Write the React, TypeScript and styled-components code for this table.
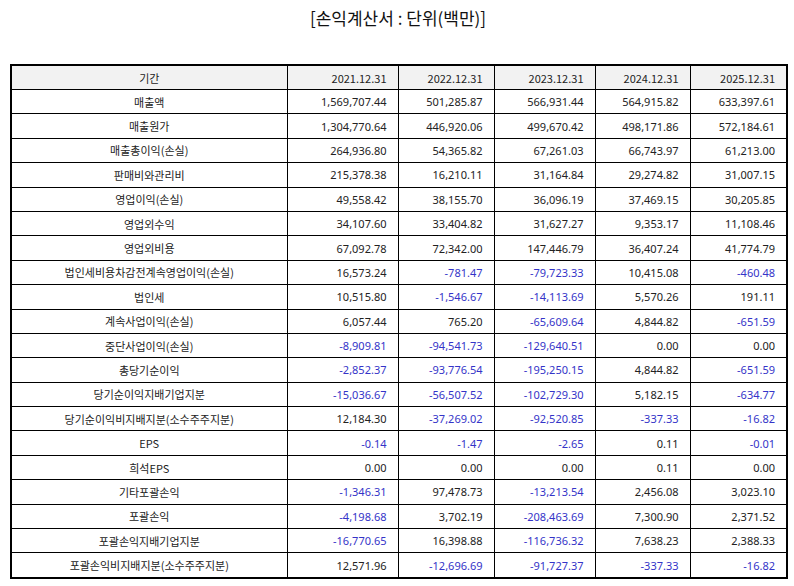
import React from 'react';
import styled, { createGlobalStyle } from 'styled-components';

const GlobalStyle = createGlobalStyle`
  body {
    margin: 0;
    background: #ffffff;
    font-family: "Noto Sans", "Noto Sans CJK KR", sans-serif;
  }
`;

const Page = styled.div`
  width: 794px;
  padding: 6px 8px 0 10px;
  box-sizing: border-box;
`;

const Title = styled.h1`
  margin: 0;
  height: 58px;
  font-size: 17px;
  font-weight: 400;
  text-align: center;
  color: #111;
  line-height: 24px;
  font-family: "Noto Sans CJK KR", sans-serif;
`;

const Table = styled.table`
  width: 776px;
  border-collapse: collapse;
  table-layout: fixed;
  border: 2px solid #000;
  font-size: 11px;
  color: #222;
`;

const HeadCell = styled.th<{ $label?: boolean }>`
  height: 23px;
  padding: 0 11px;
  border: 1px solid #000;
  background: #f2f2f2;
  font-weight: 400;
  text-align: ${(p) => (p.$label ? 'center' : 'right')};
  font-family: "Noto Sans CJK KR", sans-serif;
`;

const LabelCell = styled.td`
  height: 23.4px;
  padding: 0 8px;
  border: 1px solid #000;
  text-align: center;
  font-family: "Noto Sans CJK KR", sans-serif;
`;

const ValueCell = styled.td<{ $neg: boolean }>`
  padding: 0 11px;
  border: 1px solid #000;
  text-align: right;
  color: ${(p) => (p.$neg ? '#3434c8' : '#222')};
`;

const years = ['2021.12.31', '2022.12.31', '2023.12.31', '2024.12.31', '2025.12.31'];
const widths = [276, 111, 96, 101, 95, 97];

const rows: [string, string[]][] = [
  ['매출액', ['1,569,707.44', '501,285.87', '566,931.44', '564,915.82', '633,397.61']],
  ['매출원가', ['1,304,770.64', '446,920.06', '499,670.42', '498,171.86', '572,184.61']],
  ['매출총이익(손실)', ['264,936.80', '54,365.82', '67,261.03', '66,743.97', '61,213.00']],
  ['판매비와관리비', ['215,378.38', '16,210.11', '31,164.84', '29,274.82', '31,007.15']],
  ['영업이익(손실)', ['49,558.42', '38,155.70', '36,096.19', '37,469.15', '30,205.85']],
  ['영업외수익', ['34,107.60', '33,404.82', '31,627.27', '9,353.17', '11,108.46']],
  ['영업외비용', ['67,092.78', '72,342.00', '147,446.79', '36,407.24', '41,774.79']],
  ['법인세비용차감전계속영업이익(손실)', ['16,573.24', '-781.47', '-79,723.33', '10,415.08', '-460.48']],
  ['법인세', ['10,515.80', '-1,546.67', '-14,113.69', '5,570.26', '191.11']],
  ['계속사업이익(손실)', ['6,057.44', '765.20', '-65,609.64', '4,844.82', '-651.59']],
  ['중단사업이익(손실)', ['-8,909.81', '-94,541.73', '-129,640.51', '0.00', '0.00']],
  ['총당기순이익', ['-2,852.37', '-93,776.54', '-195,250.15', '4,844.82', '-651.59']],
  ['당기순이익지배기업지분', ['-15,036.67', '-56,507.52', '-102,729.30', '5,182.15', '-634.77']],
  ['당기순이익비지배지분(소수주주지분)', ['12,184.30', '-37,269.02', '-92,520.85', '-337.33', '-16.82']],
  ['EPS', ['-0.14', '-1.47', '-2.65', '0.11', '-0.01']],
  ['희석EPS', ['0.00', '0.00', '0.00', '0.11', '0.00']],
  ['기타포괄손익', ['-1,346.31', '97,478.73', '-13,213.54', '2,456.08', '3,023.10']],
  ['포괄손익', ['-4,198.68', '3,702.19', '-208,463.69', '7,300.90', '2,371.52']],
  ['포괄손익지배기업지분', ['-16,770.65', '16,398.88', '-116,736.32', '7,638.23', '2,388.33']],
  ['포괄손익비지배지분(소수주주지분)', ['12,571.96', '-12,696.69', '-91,727.37', '-337.33', '-16.82']],
];

export default function App() {
  return (
    <Page>
      <GlobalStyle />
      <Title>[손익계산서 : 단위(백만)]</Title>
      <Table>
        <colgroup>
          {widths.map((w, i) => (
            <col key={i} style={{ width: w }} />
          ))}
        </colgroup>
        <thead>
          <tr>
            <HeadCell $label>기간</HeadCell>
            {years.map((y) => (
              <HeadCell key={y}>{y}</HeadCell>
            ))}
          </tr>
        </thead>
        <tbody>
          {rows.map(([label, values]) => (
            <tr key={label}>
              <LabelCell>{label}</LabelCell>
              {values.map((v, i) => (
                <ValueCell key={i} $neg={v.startsWith('-')}>
                  {v}
                </ValueCell>
              ))}
            </tr>
          ))}
        </tbody>
      </Table>
    </Page>
  );
}
